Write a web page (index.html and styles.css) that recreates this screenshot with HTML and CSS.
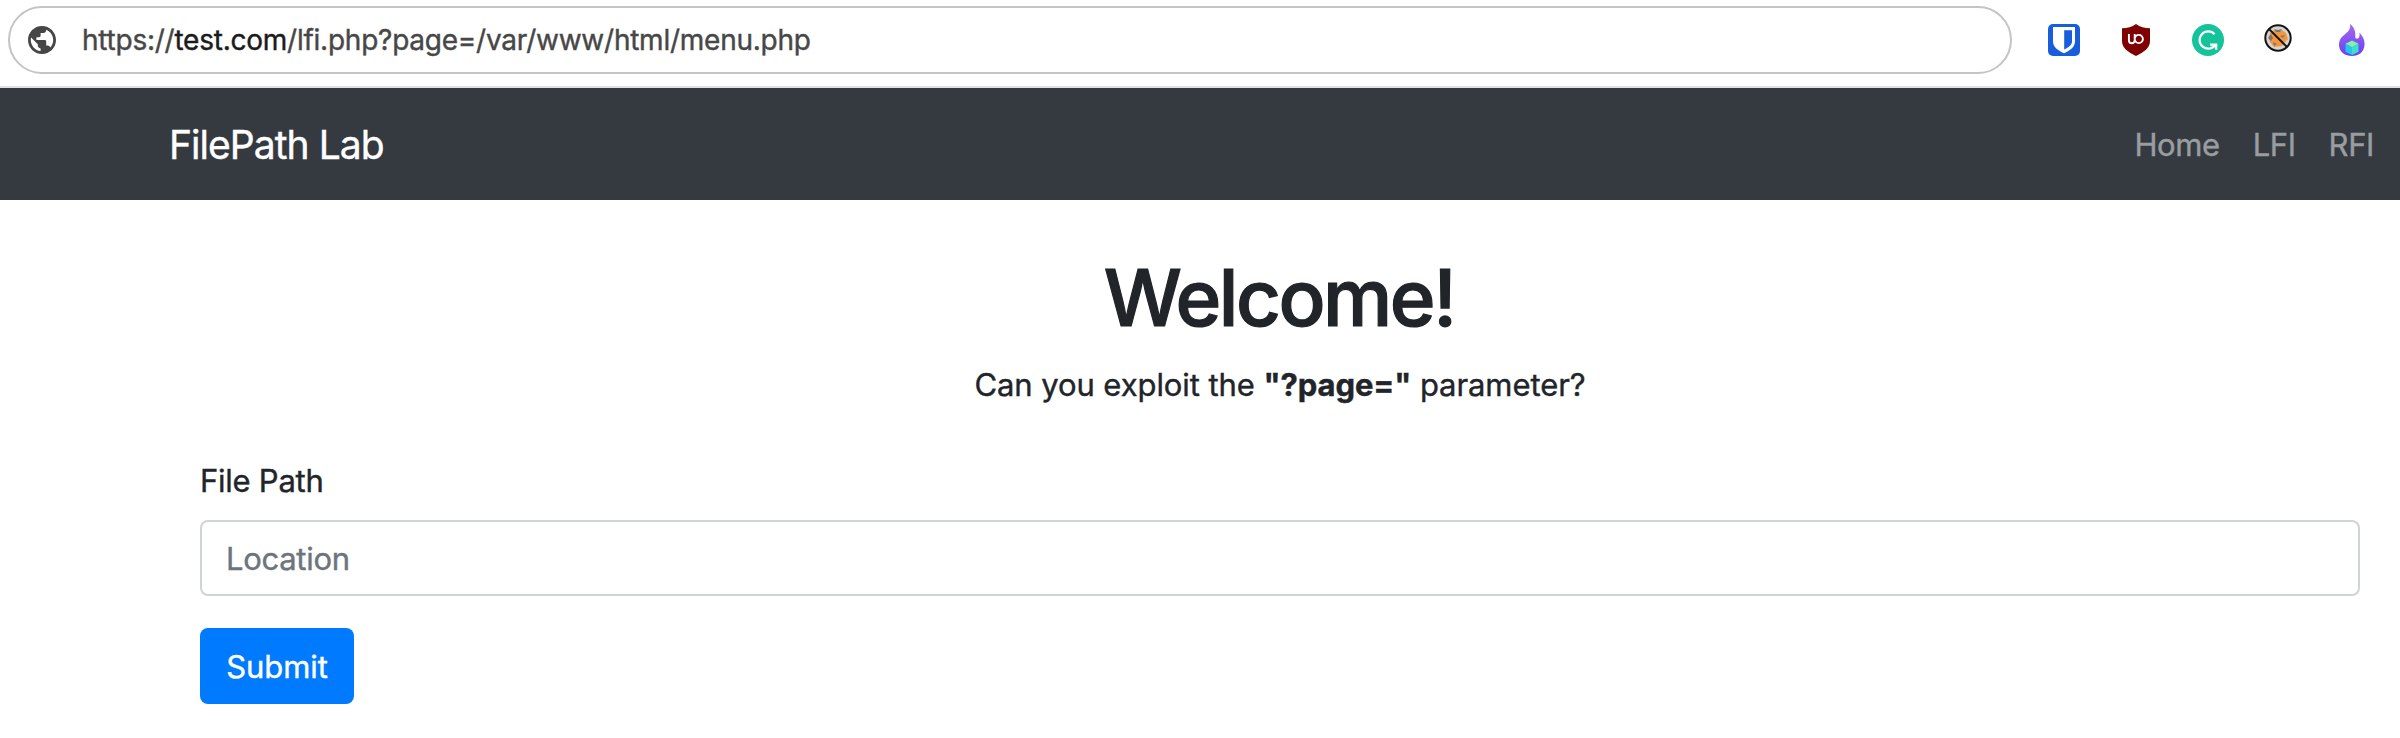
FILE: index.html
```html
<!DOCTYPE html>
<html lang="en">
<head>
<meta charset="utf-8">
<title>FilePath Lab</title>
<link rel="stylesheet" href="styles.css">
</head>
<body>
<div class="toolbar">
  <div class="address">
    <svg class="globe" viewBox="2 2 20 20"><path fill="#464646" d="M12 2C6.48 2 2 6.48 2 12s4.480 10 10 10 10-4.480 10-10S17.520 2 12 2zm-1 17.930c-3.950-.490-7-3.850-7-7.930 0-.620.080-1.210.210-1.790L9 15v1c0 1.100.900 2 2 2v1.930zm6.900-2.540c-.260-.810-1-1.390-1.900-1.390h-1v-3c0-.550-.450-1-1-1H8v-2h2c.550 0 1-.450 1-1V7h2c1.100 0 2-.900 2-2v-.410c2.930 1.190 5 4.060 5 7.410 0 2.080-.800 3.970-2.100 5.390z"/></svg>
    <span class="url">https://<span class="host">test.com</span>/lfi.php?page=/var/www/html/menu.php</span>
  </div>
  <div class="extensions">
    <svg class="ext" viewBox="0 0 32 32"><rect width="32" height="32" rx="5" fill="#175ddc"/><path fill="#fff" d="M5 3h22v14.500C27 23 22 26.500 16 29.200 10 26.500 5 23 5 17.500z"/><path fill="#175ddc" d="M16.200 6.300h7.800v11.200c0 3.300-3.500 5.900-7.800 8.100z"/></svg>
    <svg class="ext" viewBox="0 0 32 32"><path fill="#800000" d="M16 0c4 3 8.500 4.300 14 4.300V17c0 7-6 11-14 15C8 28 2 24 2 17V4.300C7.500 4.300 12 3 16 0z"/><path fill="none" stroke="#fff" stroke-width="1.900" d="M8.900 10v6.200c0 4 5.800 4 5.800 0V10M14.700 15a4.100 4.100 0 1 0 8.200 0 4.100 4.100 0 1 0-8.200 0"/></svg>
    <svg class="ext" viewBox="0 0 32 32"><circle cx="16" cy="16" r="16" fill="#15c39a"/><path fill="none" stroke="#fff" stroke-width="2.200" d="M22.600 10.300A8.600 8.600 0 1 0 23.600 20.500M18 20.700h6.200v5"/></svg>
    <svg class="ext ext-fox" viewBox="0 0 28 28"><circle cx="14" cy="14" r="12.500" fill="#d6d4d2"/><path fill="#f3963c" d="M6 9l4-3 3 2 5-2 4 3 2 6-4 4-2 3-8 1-4-5-1-5z"/><path fill="#777" d="M4 14l3-4 2 4-2 3zM16 12l5-1-2 3zM10 5l4 1 4-1-2 3h-4zM9 18l4 2-3 2z"/><circle cx="14" cy="14" r="12.700" fill="none" stroke="#151515" stroke-width="2"/><path stroke="#151515" stroke-width="2" d="M5 5l18 18"/></svg>
    <svg class="ext ext-flame" viewBox="0 0 26 32"><defs><linearGradient id="flame" x1="0" y1="0" x2="0" y2="1"><stop offset="0" stop-color="#a966ed"/><stop offset="1" stop-color="#6544f4"/></linearGradient></defs><path fill="url(#flame)" d="M11 0c4 3 6 7 5.200 13 .2 2.200 3.200 2.200 4 0 .5-1.500.5-3 .1-4.400C23.500 12 26 16 25.500 21 25 28 20 32 13 32S.5 28 0 21.500C-.3 14 5 11.500 9 7.500 11 5 11.500 3 11 0z"/><path fill="#7ef5a8" d="M13 16.500l6.500 3.300-6.500 3.400-6.500-3.400z"/><path fill="#23c8ee" d="M6.500 19.800l6.500 3.400V31l-6.500-3.300z"/><path fill="#3fe0c8" d="M19.500 19.800L13 23.200V31l6.500-3.300z"/></svg>
  </div>
</div>
<nav class="navbar">
  <a class="brand">FilePath Lab</a>
  <div class="links"><a class="home">Home</a><a>LFI</a><a>RFI</a></div>
</nav>
<main class="content">
  <h1 class="title">Welcome!</h1>
  <p class="lead">Can you exploit the <b>"?page="</b> parameter?</p>
  <form class="form">
    <label class="label" for="path">File Path</label>
    <input class="field" id="path" type="text" placeholder="Location">
    <button class="submit" type="button">Submit</button>
  </form>
</main>
</body>
</html>
```
FILE: styles.css
```css
* { box-sizing: border-box; }
body { margin: 0; background: #fff; color: #212529; font-family: Inter, "Liberation Sans", sans-serif; font-size: 31px; line-height: 48px; -webkit-text-stroke: .4px currentColor; }
.toolbar { height: 88px; border-bottom: 2px solid #dee1df; padding: 6px 32px 0 8px; display: flex; justify-content: space-between; align-items: flex-start; }
.address { width: 2004px; height: 68px; border: 2px solid #c4c4c4; border-radius: 34px; display: flex; align-items: center; padding-left: 18px; }
.globe { width: 28px; height: 28px; }
.url { margin-left: 26px; font-size: 28px; color: #474747; white-space: nowrap; letter-spacing: -.24px; }
.host { color: #1b1b1b; }
.extensions { display: flex; width: 320px; padding-top: 18px; align-items: flex-start; }
.ext { width: 32px; height: 32px; margin-right: 40px; flex: none; }
.ext-fox { width: 28px; height: 28px; margin-right: 47px; }
.ext-flame { width: 26px; margin-right: 0; }
.navbar { height: 112px; background: #343a40; display: flex; justify-content: space-between; align-items: center; padding: 2px 26px 0 169px; }
.brand { color: #fff; font-size: 39px; letter-spacing: -.95px; }
.links { display: flex; gap: 33px; color: #9a9da0; letter-spacing: -.4px; }
.content { padding: 50px 40px 0 200px; }
.title { margin: 0 0 15px; font-size: 78px; line-height: 96px; font-weight: 500; -webkit-text-stroke: 1.2px currentColor; text-align: center; letter-spacing: -2.5px; text-indent: -2px; }
.lead { margin: 0; text-align: center; letter-spacing: -.08px; }
.lead b { font-weight: 700; }
.form { display: flex; flex-direction: column; align-items: flex-start; margin-top: 48px; }
.label { margin-bottom: 15px; letter-spacing: -.25px; }
.field { width: 100%; height: 76px; border: 2px solid #ced4da; border-radius: 8px; padding: 0 24px; font: inherit; letter-spacing: -.3px; background: #fff; }
.field::placeholder { color: #6c757d; opacity: 1; }
.submit { margin-top: 32px; width: 154px; height: 76px; border: 0; border-radius: 8px; background: #007bff; color: #fff; font: inherit; padding: 1px 0 0; letter-spacing: -.1px; }
```
